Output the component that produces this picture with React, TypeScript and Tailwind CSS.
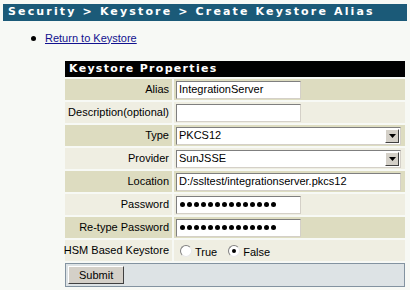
import React from 'react';

const font = { fontFamily: '"Liberation Sans", Arial, sans-serif' };
const boldFont = { fontFamily: '"DejaVu Sans", Verdana, sans-serif' };

const TextBox = ({ value, wide, password }: { value?: string; wide?: boolean; password?: boolean }) => (
  <div
    className={`h-[18px] bg-white border border-t-[#7f7f7f] border-l-[#7f7f7f] border-r-[#d4d0c8] border-b-[#d4d0c8] flex items-center px-[2px] text-[11px] text-black whitespace-nowrap ${
      wide ? 'w-[225px]' : 'w-[125px]'
    }`}
  >
    {password ? (
      <span className="flex gap-[2px] pl-[1px]">
        {Array.from({ length: 14 }).map((_, i) => (
          <span key={i} className="w-[5px] h-[5px] rounded-full bg-black" />
        ))}
      </span>
    ) : (
      value
    )}
  </div>
);

const Select = ({ value }: { value: string }) => (
  <div className="h-[18px] w-[225px] bg-white border border-t-[#7f7f7f] border-l-[#7f7f7f] border-r-[#d4d0c8] border-b-[#d4d0c8] flex items-center text-[11px] text-black">
    <span className="flex-1 px-[2px]">{value}</span>
    <span className="w-[14px] h-[14px] mr-[1px] bg-[#d4d0c8] border border-t-white border-l-white border-r-[#404040] border-b-[#404040] flex items-center justify-center">
      <svg width="7" height="4" viewBox="0 0 7 4">
        <path d="M0 0h7L3.5 4z" fill="#000" />
      </svg>
    </span>
  </div>
);

const Radio = ({ checked }: { checked?: boolean }) => (
  <span className="w-[12px] h-[12px] rounded-full bg-white border border-t-[#808080] border-l-[#808080] border-r-[#e8e8e8] border-b-[#e8e8e8] flex items-center justify-center">
    {checked && <span className="w-[4px] h-[4px] rounded-full bg-black" />}
  </span>
);

const rows: { label: string; field: React.ReactNode }[] = [
  { label: 'Alias', field: <TextBox value="IntegrationServer" /> },
  { label: 'Description(optional)', field: <TextBox value="" /> },
  { label: 'Type', field: <Select value="PKCS12" /> },
  { label: 'Provider', field: <Select value="SunJSSE" /> },
  { label: 'Location', field: <TextBox value="D:/ssltest/integrationserver.pkcs12" wide /> },
  { label: 'Password', field: <TextBox password /> },
  { label: 'Re-type Password', field: <TextBox password /> },
  {
    label: 'HSM Based Keystore',
    field: (
      <div className="flex items-center gap-[3px] text-[11px] text-black pl-[4px]">
        <Radio />
        <span className="mt-[3px] mr-[8px]">True</span>
        <Radio checked />
        <span className="mt-[3px]">False</span>
      </div>
    ),
  },
];

export default function App() {
  return (
    <div className="w-[410px] h-[290px] bg-[#f7f9f5] pt-[4px] px-[3px] overflow-hidden" style={font}>
      {/* Breadcrumb bar */}
      <div
        className="h-[17px] bg-[#1b5a78] flex items-center pl-[5px] text-white text-[11px] font-bold tracking-[2.15px] whitespace-nowrap"
        style={boldFont}
      >
        Security &gt; Keystore &gt; Create Keystore Alias
      </div>

      {/* Return link */}
      <div className="flex items-center mt-[9px] pl-[28px] h-[16px] text-[11px]">
        <span className="w-[5px] h-[5px] rounded-full bg-black mr-[9px]" />
        <span className="text-[#12128f] underline">Return to Keystore</span>
      </div>

      {/* Properties table */}
      <div className="ml-[62px] mt-[15px] w-[340px] flex flex-col gap-[2px]">
        <div
          className="h-[16px] bg-black flex items-center pl-[4px] text-white text-[11px] font-bold tracking-[1.3px]"
          style={boldFont}
        >
          Keystore Properties
        </div>
        {rows.map((r, i) => (
          <div key={r.label} className="grid grid-cols-[107px_1fr] gap-[2px] h-[21px]">
            <div
              className={`flex items-center justify-end pr-[3px] text-[11px] text-black whitespace-nowrap ${
                i % 2 === 0 ? 'bg-[#dddcc0]' : 'bg-[#efeee2]'
              }`}
            >
              {r.label}
            </div>
            <div className={`flex items-center pl-[2px] ${i % 2 === 0 ? 'bg-[#dddcc0]' : 'bg-[#efeee2]'}`}>
              {r.field}
            </div>
          </div>
        ))}
        <div className="h-[24px] bg-[#dde3e5] border border-[#8393a0] flex items-center pl-[2px]">
          <button className="h-[18px] px-[10px] bg-[#d4d0c8] border border-t-white border-l-white border-r-[#404040] border-b-[#404040] text-[11px] text-black leading-none">
            Submit
          </button>
        </div>
      </div>
    </div>
  );
}
